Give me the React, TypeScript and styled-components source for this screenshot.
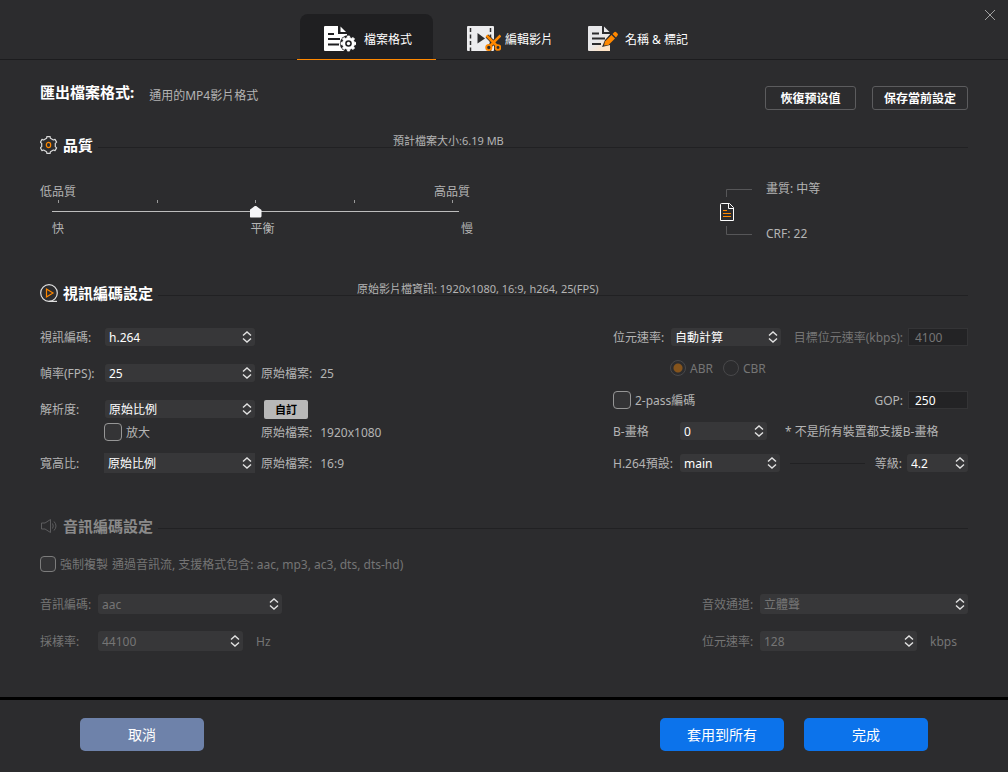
import React from 'react';
import styled, { createGlobalStyle } from 'styled-components';

const color = {
  bg: '#2c2c2e',
  tab: '#1f1f21',
  rule: '#212123',
  field: '#373739',
  text: '#b4b4b4',
  dim: '#757575',
  white: '#ffffff',
  orange: '#ff8800',
  blue: '#0c73eb',
};

const GlobalStyle = createGlobalStyle`
  * { box-sizing: border-box; }
  body { margin: 0; background: ${color.bg}; }
  body, button, input, select {
    font-family: "Noto Sans", "Noto Sans CJK TC", sans-serif;
    font-size: 12px;
    line-height: 14px;
  }
`;

const Dialog = styled.div`
  display: flex;
  flex-direction: column;
  min-height: 100vh;
  background: ${color.bg};
  color: ${color.text};
  white-space: nowrap;
`;

const Header = styled.header`
  display: grid;
  grid-template-columns: 1fr auto 1fr;
  height: 60px;
  border-bottom: 1px solid #1c1c1e;
`;

const Tabs = styled.nav`
  grid-column: 2;
  display: grid;
  grid-template-columns: 139px 147px 128px;
  align-items: end;
  height: 60px;
`;

const Tab = styled.button<{ $active?: boolean }>`
  height: 46px;
  padding: 0 3px;
  border: 0;
  border-bottom: 1px solid ${(p) => (p.$active ? color.orange : 'transparent')};
  background: none;
  color: ${color.white};
`;

const TabFace = styled.span<{ $active?: boolean; $pad: number; $gap: number }>`
  display: flex;
  align-items: center;
  gap: ${(p) => p.$gap}px;
  height: 45px;
  padding: 4px 0 0 ${(p) => p.$pad}px;
  border-radius: 8px 8px 0 0;
  background: ${(p) => (p.$active ? color.tab : 'none')};
`;

const TabLabel = styled.span`
  padding-top: 3px;
`;

const CloseButton = styled.button`
  grid-column: 3;
  justify-self: end;
  width: 14px;
  height: 14px;
  margin: 8px 11px 0 0;
  padding: 0;
  border: 0;
  background: none;
  line-height: 0;
`;

const Body = styled.main`
  flex: 1;
  padding: 26px 40px 44px;
`;

const TitleBar = styled.div`
  display: flex;
  align-items: center;
  height: 24px;
`;

const PageTitle = styled.h1`
  margin: 0 15px 12px 0;
  font-size: 15px;
  line-height: 16px;
  color: ${color.white};
`;

const Subtitle = styled.span`
  margin-bottom: 4px;
`;

const OutlineButton = styled.button<{ $width: number }>`
  width: ${(p) => p.$width}px;
  height: 24px;
  margin-left: 16px;
  padding: 2px 0 0;
  border: 1px solid #5c5c5e;
  border-radius: 3px;
  background: none;
  color: ${color.white};
  font-weight: bold;
  &:first-of-type { margin-left: auto; }
`;

const Heading = styled.div<{ $top: number }>`
  display: flex;
  align-items: flex-start;
  height: 20px;
  margin-top: ${(p) => p.$top}px;
  & > svg { flex: none; }
`;

const SectionTitle = styled.h2<{ $dim?: boolean }>`
  margin: 1px 5px 0;
  font-size: 15px;
  line-height: 16px;
  color: ${(p) => (p.$dim ? '#8a8a8a' : color.white)};
`;

const Rule = styled.div<{ $indent?: number }>`
  flex: 1;
  height: 12px;
  padding-left: ${(p) => p.$indent ?? 0}px;
  border-bottom: 1px solid ${color.rule};
  font-size: 11px;
  line-height: 9px;
`;

const Split = styled.div<{ $top: number }>`
  display: flex;
  justify-content: space-between;
  align-items: flex-start;
  margin-top: ${(p) => p.$top}px;
`;

const Speed = styled.div`
  width: 433px;
  padding-top: 3px;
`;

const Ends = styled.div<{ $inset?: boolean }>`
  display: flex;
  justify-content: space-between;
  ${(p) => (p.$inset ? 'margin: 4px 0 0 12px;' : 'margin-right: 3px;')}
`;

const Ticks = styled.div`
  display: flex;
  justify-content: space-between;
  width: 407px;
  margin: 1px 0 2px 12px;
  padding: 0 6px;
`;

const Tick = styled.i`
  width: 1px;
  height: 3px;
  background: #9a9a9a;
`;

const Slider = styled.input`
  display: block;
  appearance: none;
  width: 407px;
  height: 13px;
  margin: 0 0 0 12px;
  background: linear-gradient(#bdbdbd, #bdbdbd) 0 6px / 100% 1px no-repeat;
  &::-webkit-slider-thumb {
    appearance: none;
    width: 12px;
    height: 12px;
    background: #f6f6f8;
    clip-path: polygon(50% 0, 100% 38%, 100% 92%, 92% 100%, 8% 100%, 0 92%, 0 38%);
  }
`;

const Summary = styled.div`
  display: flex;
  gap: 14px;
  width: 248px;
`;

const SummaryText = styled.div`
  display: flex;
  flex-direction: column;
  justify-content: space-between;
`;

const Column = styled.div<{ $width: number }>`
  width: ${(p) => p.$width}px;
`;

const Row = styled.div<{ $top?: number; $tall?: boolean; $indent?: number }>`
  display: flex;
  align-items: center;
  height: ${(p) => (p.$tall ? 20 : 18)}px;
  margin-top: ${(p) => p.$top ?? 0}px;
  padding-left: ${(p) => p.$indent ?? 0}px;
`;

const Label = styled.label<{ $width?: number; $dim?: boolean }>`
  flex: none;
  width: ${(p) => (p.$width ? `${p.$width}px` : 'auto')};
  padding-top: 2px;
  color: ${(p) => (p.$dim ? color.dim : 'inherit')};
`;

const EndLabel = styled(Label)`
  margin: 0 5px 0 auto;
`;

const Note = styled.span<{ $left: number; $dim?: boolean }>`
  margin-left: ${(p) => p.$left}px;
  padding-top: 2px;
  color: ${(p) => (p.$dim ? color.dim : 'inherit')};
`;

const Source = styled.span`
  display: flex;
  gap: 8px;
  margin-left: 6px;
  padding-top: 2px;
`;

const SelectBox = styled.div<{ $width: number; $tall?: boolean; $square?: boolean }>`
  position: relative;
  flex: none;
  width: ${(p) => p.$width}px;
  height: ${(p) => (p.$tall ? 20 : 18)}px;
  border-radius: ${(p) => (p.$square ? 0 : 3)}px;
  background: ${color.field};
  & > svg {
    position: absolute;
    top: 50%;
    right: 3px;
    margin-top: -6px;
    pointer-events: none;
  }
`;

const SelectInput = styled.select`
  appearance: none;
  display: block;
  width: 100%;
  height: 100%;
  padding: 2px 16px 0 4px;
  border: 0;
  background: none;
  color: ${color.white};
  opacity: 1;
  &:disabled { color: ${color.dim}; }
`;

const TextInput = styled.input`
  width: 60px;
  height: 18px;
  padding: 0 6px;
  border: 1px solid #343436;
  background: #232325;
  color: ${color.white};
  &:disabled { color: ${color.dim}; }
`;

const Check = styled.input<{ $size?: number }>`
  appearance: none;
  flex: none;
  width: ${(p) => p.$size ?? 18}px;
  height: ${(p) => p.$size ?? 18}px;
  margin: 0 4px 0 0;
  border: 1px solid #969696;
  border-radius: 4px;
  background: #343436;
  &:disabled { border-color: #7c7c7c; }
`;

const Radio = styled.input`
  appearance: none;
  width: 16px;
  height: 16px;
  margin: 0 4px 0 0;
  border: 1px solid #48484a;
  border-radius: 50%;
  &:checked { background: radial-gradient(circle, #85541c 4px, transparent 5px); }
`;

const RadioLabel = styled.label`
  display: flex;
  align-items: center;
  margin-right: 10px;
  color: ${color.dim};
`;

const RadioText = styled.span`
  padding-top: 2px;
`;

const CustomButton = styled.button`
  width: 44px;
  height: 19px;
  margin-left: 9px;
  padding: 2px 0 0;
  border: 0;
  border-radius: 2px;
  background: #b8b8b8;
  color: #000;
  font-size: 11px;
  font-weight: bold;
`;

const Connector = styled.hr`
  flex: 1;
  height: 1px;
  margin: 0 10px;
  border: 0;
  background: ${color.rule};
  & + label { margin-left: 0; }
`;

const Footer = styled.footer`
  display: flex;
  gap: 20px;
  height: 75px;
  padding: 18px 80px 0;
  border-top: 3px solid #000;
`;

const FooterButton = styled.button<{ $muted?: boolean }>`
  width: 124px;
  height: 33px;
  padding: 0;
  border: 0;
  border-radius: 5px;
  background: ${(p) => (p.$muted ? '#6e82aa' : color.blue)};
  color: ${color.white};
  font-size: 14px;
  ${(p) => p.$muted && 'margin-right: auto;'}
`;

/* Outline of a cog with its first tooth pointing up. */
function gearPath(cx: number, cy: number, teeth: number, outer: number, inner: number) {
  const step = (Math.PI * 2) / teeth;
  const pts: string[] = [];
  for (let i = 0; i < teeth; i++) {
    const a = i * step - Math.PI / 2;
    [[-0.27, inner], [-0.18, outer], [0.18, outer], [0.27, inner]].forEach(([k, r]) => {
      const t = a + k * step;
      pts.push(`${(cx + r * Math.cos(t)).toFixed(2)} ${(cy + r * Math.sin(t)).toFixed(2)}`);
    });
  }
  return `M${pts.join('L')}Z`;
}

const FormatIcon = () => (
  <svg width="32" height="26" viewBox="0 0 32 26">
    <path d="M1 0H14V8H23V25H1Q0 25 0 24V1Q0 0 1 0Z" fill="#fff" />
    <path d="M16.500 0.500V6H22Z" fill="#fff" />
    <path d="M4 8H10M4 13H16M4 18.500H15" stroke={color.tab} strokeWidth="2" />
    <circle cx="24.500" cy="17.500" r="8.600" fill={color.tab} />
    <path d={gearPath(24.5, 17.5, 8, 7.6, 6)} fill="#fff" stroke="#fff" strokeLinejoin="round" strokeWidth="0.800" />
    <circle cx="24.500" cy="17.500" r="3.300" fill={color.tab} />
    <circle cx="24.500" cy="17.500" r="1.700" fill="#fff" />
  </svg>
);

const ClipIcon = () => (
  <svg width="34" height="26" viewBox="0 0 34 26">
    <rect x="0" y="0" width="27" height="25" rx="1" fill="#ececee" />
    <path d="M3.500 2V25" stroke={color.bg} strokeWidth="1.500" strokeDasharray="4 2.500" />
    <path d="M23.500 2V25" stroke={color.bg} strokeWidth="1.500" strokeDasharray="4 2.500" />
    <path d="M10.500 7V17.500L18 12.500Z" fill={color.bg} />
    <path d="M20 10L30 20M33 10L23 20" stroke={color.bg} strokeWidth="4" />
    <path d="M19.500 9.500L30 20M33.500 9.500L23 20" stroke={color.orange} strokeWidth="2.600" />
    <circle cx="21.800" cy="21.500" r="2.600" fill={color.bg} stroke={color.orange} strokeWidth="1.900" />
    <circle cx="31" cy="21.500" r="2.400" fill={color.bg} stroke={color.orange} strokeWidth="1.900" />
  </svg>
);

const RenameIcon = () => (
  <svg width="31" height="26" viewBox="0 0 31 26">
    <defs>
      <linearGradient id="page" x1="0" y1="0" x2="0.700" y2="1">
        <stop offset="0.600" stopColor="#e8e8ea" />
        <stop offset="1" stopColor="#ffe3c4" />
      </linearGradient>
    </defs>
    <path d="M1 0H14V8H22V25H1Q0 25 0 24V1Q0 0 1 0Z" fill="url(#page)" />
    <path d="M16 0.500V6H21.500Z" fill="#e8e8ea" />
    <path d="M4 7.500H11M4 12.500H17M4 18H13" stroke={color.bg} strokeWidth="2" />
    <path d="M14 21L17 14L25 5L31 10L22 19Z" fill={color.bg} />
    <path d="M16 19.500L17 15.500L23.500 9L27 12.500L20.500 19Z" fill={color.orange} />
    <path d="M24.500 8L26.500 6Q27.500 5.500 28.500 6.500L29.500 7.500Q30.500 8.500 29.500 9.500L28 11.500Z" fill={color.orange} />
  </svg>
);

const QualityIcon = () => (
  <svg width="18" height="18" viewBox="0 0 18 18" fill="none">
    <path d={gearPath(8.5, 9, 6, 8.6, 7)} stroke="#d8d8d8" strokeWidth="1.200" strokeLinejoin="round" />
    <ellipse cx="8.500" cy="9" rx="2.200" ry="2.700" stroke={color.orange} strokeWidth="1.200" />
  </svg>
);

const VideoIcon = () => (
  <svg width="18" height="18" viewBox="0 0 18 18" fill="none">
    <circle cx="9" cy="9" r="8.300" stroke="#e0e0e0" strokeWidth="1.200" />
    <path d="M9 17.400H17" stroke="#e0e0e0" strokeWidth="1.200" />
    <path d="M6.500 5V13L13 9Z" stroke={color.orange} strokeWidth="1.200" />
  </svg>
);

const AudioIcon = () => (
  <svg width="18" height="18" viewBox="0 0 18 18" fill="none" stroke="#5c5c5e">
    <path d="M1.500 6H5L10.500 2.500V15.500L5 12H1.500Z" />
    <path d="M12.500 6.500Q14 9 12.500 11.500M14 4.500Q18 9 14 13.500" />
  </svg>
);

const SummaryIcon = () => (
  <svg width="32" height="59" viewBox="0 0 32 59" fill="none">
    <path d="M6.500 15V7.500H32M6.500 44V52.500H32" stroke="#565658" />
    <path d="M1.500 21.500H9.500L13.500 25.500V38.500H0.500V22.500Q0.500 21.500 1.500 21.500Z" stroke="#fff" />
    <path d="M8.500 21.500V26.500H13.500" stroke="#fff" />
    <path d="M3 28.500H7M3 31.500H11M3 34.500H11" stroke={color.orange} />
  </svg>
);

const Chevrons = () => (
  <svg width="10" height="12" viewBox="0 0 10 12" fill="none" stroke="#e2e2e2" strokeWidth="1.400">
    <path d="M1 4.500L5 1L9 4.500M1 7.500L5 11L9 7.500" />
  </svg>
);

type SelectProps = {
  id: string;
  value: string;
  width: number;
  tall?: boolean;
  square?: boolean;
  disabled?: boolean;
};

const Select = ({ id, value, width, tall, square, disabled }: SelectProps) => (
  <SelectBox $width={width} $tall={tall} $square={square}>
    <SelectInput id={id} defaultValue={value} disabled={disabled}>
      <option>{value}</option>
    </SelectInput>
    <Chevrons />
  </SelectBox>
);

const Original = ({ value }: { value: string }) => (
  <Source>
    <span>原始檔案:</span>
    <span>{value}</span>
  </Source>
);

export default function App() {
  return (
    <Dialog>
      <GlobalStyle />
      <Header>
        <Tabs>
          <Tab $active>
            <TabFace $active $pad={24} $gap={8}><FormatIcon /><TabLabel>檔案格式</TabLabel></TabFace>
          </Tab>
          <Tab>
            <TabFace $pad={28} $gap={4}><ClipIcon /><TabLabel>編輯影片</TabLabel></TabFace>
          </Tab>
          <Tab>
            <TabFace $pad={2} $gap={6}><RenameIcon /><TabLabel>名稱 &amp; 標記</TabLabel></TabFace>
          </Tab>
        </Tabs>
        <CloseButton aria-label="關閉">
          <svg width="14" height="14" viewBox="0 0 14 14" stroke="#a0a0a0">
            <path d="M2 2L12 12M12 2L2 12" />
          </svg>
        </CloseButton>
      </Header>

      <Body>
        <TitleBar>
          <PageTitle>匯出檔案格式:</PageTitle>
          <Subtitle>通用的MP4影片格式</Subtitle>
          <OutlineButton $width={91}>恢復预设值</OutlineButton>
          <OutlineButton $width={96}>保存當前設定</OutlineButton>
        </TitleBar>

        <Heading $top={26}>
          <QualityIcon />
          <SectionTitle>品質</SectionTitle>
          <Rule $indent={295}>預計檔案大小:6.19 MB</Rule>
        </Heading>
        <Split $top={26}>
          <Speed>
            <Ends><span>低品質</span><span>高品質</span></Ends>
            <Ticks><Tick /><Tick /><Tick /><Tick /><Tick /></Ticks>
            <Slider type="range" min={0} max={4} defaultValue={2} aria-label="品質" />
            <Ends $inset><span>快</span><span>平衡</span><span>慢</span></Ends>
          </Speed>
          <Summary>
            <SummaryIcon />
            <SummaryText><span>畫質: 中等</span><span>CRF: 22</span></SummaryText>
          </Summary>
        </Split>

        <Heading $top={43}>
          <VideoIcon />
          <SectionTitle>視訊編碼設定</SectionTitle>
          <Rule $indent={199}>原始影片檔資訊: 1920x1080, 16:9, h264, 25(FPS)</Rule>
        </Heading>
        <Split $top={24}>
          <Column $width={360}>
            <Row>
              <Label $width={65} htmlFor="vcodec">視訊編碼:</Label>
              <Select id="vcodec" value="h.264" width={150} />
            </Row>
            <Row $top={18}>
              <Label $width={65} htmlFor="fps">幀率(FPS):</Label>
              <Select id="fps" value="25" width={150} />
              <Original value="25" />
            </Row>
            <Row $top={18}>
              <Label $width={65} htmlFor="res">解析度:</Label>
              <Select id="res" value="原始比例" width={150} />
              <CustomButton>自訂</CustomButton>
            </Row>
            <Row $top={5} $indent={64}>
              <Check type="checkbox" id="enlarge" />
              <Label $width={129} htmlFor="enlarge">放大</Label>
              <Original value="1920x1080" />
            </Row>
            <Row $top={12} $tall>
              <Label $width={64} htmlFor="aspect">寬高比:</Label>
              <Select id="aspect" value="原始比例" width={151} tall square />
              <Original value="16:9" />
            </Row>
          </Column>

          <Column $width={355}>
            <Row>
              <Label $width={58} htmlFor="vrate">位元速率:</Label>
              <Select id="vrate" value="自動計算" width={110} />
              <EndLabel $dim htmlFor="target">目標位元速率(kbps):</EndLabel>
              <TextInput id="target" defaultValue="4100" disabled />
            </Row>
            <Row $top={13} $indent={57}>
              <RadioLabel>
                <Radio type="radio" name="mode" defaultChecked disabled />
                <RadioText>ABR</RadioText>
              </RadioLabel>
              <RadioLabel>
                <Radio type="radio" name="mode" disabled />
                <RadioText>CBR</RadioText>
              </RadioLabel>
            </Row>
            <Row $top={14}>
              <Check type="checkbox" id="twopass" />
              <Label htmlFor="twopass">2-pass編碼</Label>
              <EndLabel htmlFor="gop">GOP:</EndLabel>
              <TextInput id="gop" defaultValue="250" />
            </Row>
            <Row $top={13}>
              <Label $width={67} htmlFor="bframes">B-畫格</Label>
              <Select id="bframes" value="0" width={87} />
              <Note $left={18}>* 不是所有裝置都支援B-畫格</Note>
            </Row>
            <Row $top={14}>
              <Label $width={67} htmlFor="profile">H.264預設:</Label>
              <Select id="profile" value="main" width={100} />
              <Connector />
              <EndLabel htmlFor="level">等級:</EndLabel>
              <Select id="level" value="4.2" width={61} />
            </Row>
          </Column>
        </Split>

        <Heading $top={44}>
          <AudioIcon />
          <SectionTitle $dim>音訊編碼設定</SectionTitle>
          <Rule />
        </Heading>
        <Row $top={18}>
          <Check type="checkbox" id="copy" $size={16} disabled />
          <Label $dim htmlFor="copy">強制複製</Label>
          <Note $left={4} $dim>通過音訊流, 支援格式包含: aac, mp3, ac3, dts, dts-hd)</Note>
        </Row>
        <Split $top={21}>
          <Column $width={260}>
            <Row $tall>
              <Label $width={58} $dim htmlFor="acodec">音訊編碼:</Label>
              <Select id="acodec" value="aac" width={184} tall disabled />
            </Row>
            <Row $tall $top={17}>
              <Label $width={58} $dim htmlFor="sample">採樣率:</Label>
              <Select id="sample" value="44100" width={145} tall disabled />
              <Note $left={13} $dim>Hz</Note>
            </Row>
          </Column>
          <Column $width={266}>
            <Row $tall>
              <Label $width={58} $dim htmlFor="channel">音效通道:</Label>
              <Select id="channel" value="立體聲" width={208} tall disabled />
            </Row>
            <Row $tall $top={17}>
              <Label $width={58} $dim htmlFor="arate">位元速率:</Label>
              <Select id="arate" value="128" width={157} tall disabled />
              <Note $left={13} $dim>kbps</Note>
            </Row>
          </Column>
        </Split>
      </Body>

      <Footer>
        <FooterButton $muted>取消</FooterButton>
        <FooterButton>套用到所有</FooterButton>
        <FooterButton>完成</FooterButton>
      </Footer>
    </Dialog>
  );
}
